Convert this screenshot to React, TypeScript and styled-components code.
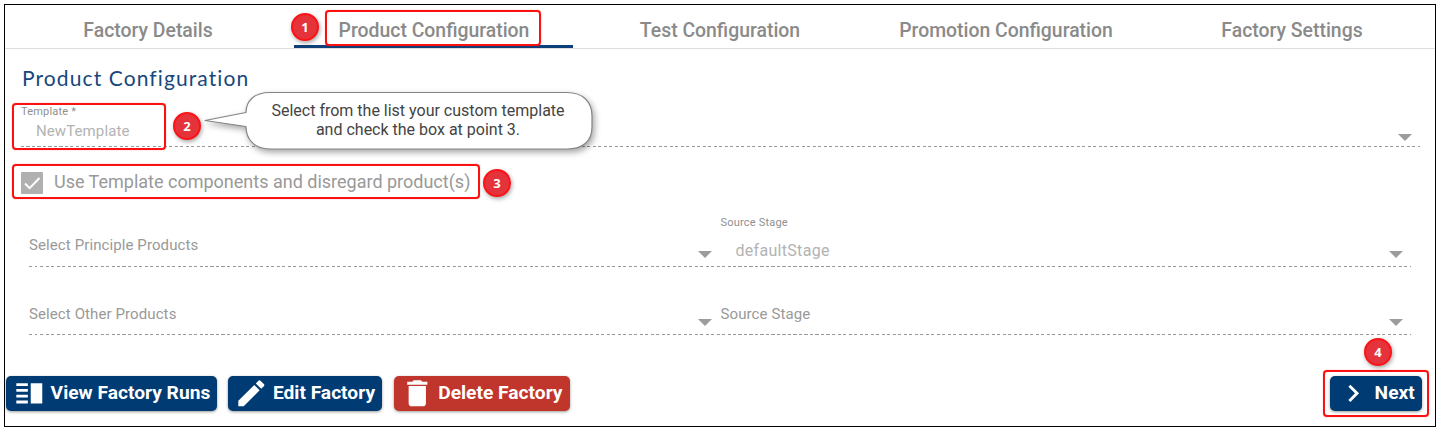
import React from 'react';
import styled, { createGlobalStyle } from 'styled-components';

const GlobalStyle = createGlobalStyle`
  *, *::before, *::after { box-sizing: border-box; }
  body { margin: 0; background: #fff; font-family: Roboto, sans-serif; }
`;

const Page = styled.div`
  position: relative;
  width: 1442px;
  height: 432px;
  padding: 4px 6px 5px 4px;
`;

const Frame = styled.main`
  display: flex;
  flex-direction: column;
  height: 423px;
  border: 1px solid #000;
`;

const Tabs = styled.nav`
  display: grid;
  grid-template-columns: repeat(5, 1fr);
  flex: none;
  height: 44px;
  border-bottom: 1px solid #dedede;
`;

const Tab = styled.a<{ $active?: boolean }>`
  height: 43px;
  margin: 0 4px 0 3px;
  padding: 1px 0 0 1px;
  border-bottom: 3px solid ${(p) => (p.$active ? '#0d4079' : 'transparent')};
  color: #8a8a8a;
  font-size: 19.4px;
  font-weight: 500;
  line-height: 49px;
  text-align: center;
  white-space: nowrap;
`;

const Title = styled.h1`
  flex: none;
  height: 54px;
  margin: 0;
  padding-left: 17px;
  color: #17477c;
  font: 400 21px/58px Lato, sans-serif;
  letter-spacing: 1.1px;
`;

const Field = styled.div`
  display: flex;
  justify-content: space-between;
  align-items: flex-end;
  flex: 1;
  height: 100%;
`;

const FieldRow = styled.div<{ $height: number; $inset: number; $right: number }>`
  display: flex;
  flex: none;
  gap: 3px;
  height: ${(p) => p.$height}px;
  margin: 0 ${(p) => p.$right}px 0 ${(p) => p.$inset}px;
  padding-right: 2px;
  background: repeating-linear-gradient(90deg, #999 0 3px, transparent 3px 5.5px) left bottom / 100% 1px no-repeat;
`;

const FieldText = styled.div`
  display: flex;
  flex-direction: column;
  justify-content: flex-end;
  height: 100%;
`;

const SmallLabel = styled.span`
  color: #8f8f8f;
  font-size: 11px;
  line-height: 14px;
  letter-spacing: 0.2px;
`;

const Value = styled.span<{ $large?: boolean }>`
  padding: ${(p) => (p.$large ? '11px 0 7px 15px' : '3px 0 6px 15px')};
  color: #b3b3b3;
  font-size: ${(p) => (p.$large ? 16 : 15)}px;
  line-height: 19px;
  letter-spacing: ${(p) => (p.$large ? 0.3 : 0.1)}px;
`;

const Placeholder = styled.span<{ $bottom: number }>`
  padding-bottom: ${(p) => p.$bottom}px;
  color: #999;
  font-size: 15px;
  line-height: 18px;
  letter-spacing: 0.1px;
`;

const Arrow = styled.i<{ $bottom?: number }>`
  margin: 0 6px ${(p) => p.$bottom ?? 9}px 0;
  border: 7px solid transparent;
  border-top-color: #9c9c9c;
  border-bottom: 0;
`;

const CheckRow = styled.label`
  display: flex;
  align-items: center;
  flex: none;
  gap: 11px;
  height: 72px;
  padding: 0 0 0 16px;
  color: #999;
  font-size: 18px;
  line-height: 22px;
  white-space: nowrap;
`;

const CheckBox = styled.span`
  display: flex;
  width: 22px;
  height: 22px;
  border-radius: 1px;
  background: #b0b0b0;
`;

const Actions = styled.footer`
  display: flex;
  align-items: flex-start;
  flex: none;
  gap: 11.3px;
  margin-top: 41px;
  padding: 0 13px 0 1px;
`;

const Button = styled.button<{ $width: number; $danger?: boolean }>`
  display: flex;
  align-items: center;
  gap: 4px;
  width: ${(p) => p.$width}px;
  height: 35px;
  padding: 0 0 0 6px;
  border: 0;
  border-radius: 5px;
  background: ${(p) => (p.$danger ? '#c1362c' : '#003b73')};
  box-shadow: 0 1px 3px rgba(0, 0, 0, 0.4);
  color: #fff;
  font: 700 19.2px/33px Roboto, sans-serif;
  white-space: nowrap;

  &:last-child { margin-left: auto; }
  svg { flex: none; width: 34.6px; height: 34.6px; fill: currentColor; }
`;

const Caption = styled.span`
  padding-bottom: 2px;
`;

const Highlight = styled.div<{ $x: number; $y: number; $w: number; $h: number }>`
  position: absolute;
  left: ${(p) => p.$x}px;
  top: ${(p) => p.$y}px;
  width: ${(p) => p.$w}px;
  height: ${(p) => p.$h}px;
  border: 2px solid #fb1111;
  border-radius: 4px;
  box-shadow: 0 0 1px rgba(251, 17, 17, 0.7);
  pointer-events: none;
`;

const Badge = styled.span<{ $x: number; $y: number }>`
  position: absolute;
  left: ${(p) => p.$x - 14}px;
  top: ${(p) => p.$y - 14}px;
  width: 28px;
  height: 28px;
  border: 2px solid #fc1318;
  border-radius: 50%;
  background: #e4333a;
  box-shadow: 1px 2px 4px rgba(0, 0, 0, 0.35);
  color: #fff;
  font: 700 13px/24px "Open Sans", sans-serif;
  text-align: center;
`;

const Callout = styled.div`
  position: absolute;
  left: 200px;
  top: 88px;
  width: 400px;
  height: 72px;
  svg { display: block; filter: drop-shadow(2px 3px 3px rgba(0, 0, 0, 0.35)); }
`;

const CalloutText = styled.p`
  position: absolute;
  left: 45px;
  top: 14px;
  width: 346px;
  margin: 0;
  color: #444;
  font: 400 16px/18.5px Roboto, sans-serif;
  text-align: center;
`;

const tabs = ['Factory Details', 'Product Configuration', 'Test Configuration', 'Promotion Configuration', 'Factory Settings'];

function Icon({ d }: { d: string }) {
  return <svg viewBox="0 0 24 24"><path d={d} /></svg>;
}

export default function App() {
  return (
    <Page>
      <GlobalStyle />
      <Frame>
        <Tabs>
          {tabs.map((t, i) => <Tab key={t} $active={i === 1}>{t}</Tab>)}
        </Tabs>
        <Title>Product Configuration</Title>
        <FieldRow $height={44} $inset={16} $right={15}>
          <Field>
            <FieldText>
              <SmallLabel>Template *</SmallLabel>
              <Value>NewTemplate</Value>
            </FieldText>
            <Arrow $bottom={6} />
          </Field>
        </FieldRow>
        <CheckRow>
          <CheckBox>
            <svg width="22" height="22" viewBox="0 0 22 22" fill="none" stroke="#fff" strokeWidth="2">
              <path d="M4 11.5l4.6 4.6L18.5 6" />
            </svg>
          </CheckBox>
          <Caption>Use Template components and disregard product(s)</Caption>
        </CheckRow>
        <FieldRow $height={48} $inset={24} $right={24}>
          <Field>
            <Placeholder $bottom={13}>Select Principle Products</Placeholder>
            <Arrow />
          </Field>
          <Field>
            <FieldText>
              <SmallLabel>Source Stage</SmallLabel>
              <Value $large>defaultStage</Value>
            </FieldText>
            <Arrow />
          </Field>
        </FieldRow>
        <FieldRow $height={68} $inset={24} $right={24}>
          <Field>
            <Placeholder $bottom={12}>Select Other Products</Placeholder>
            <Arrow />
          </Field>
          <Field>
            <Placeholder $bottom={12}>Source Stage</Placeholder>
            <Arrow />
          </Field>
        </FieldRow>
        <Actions>
          <Button $width={211}>
            <Icon d="M3 15h8v-2H3v2zm0 4h8v-2H3v2zm0-8h8V9H3v2zm0-6v2h8V5H3zm10 0h8v14h-8V5z" />
            <Caption>View Factory Runs</Caption>
          </Button>
          <Button $width={154}>
            <Icon d="M3 17.25V21h3.75L17.81 9.94l-3.75-3.75L3 17.25zM20.71 7.04a1 1 0 0 0 0-1.41l-2.34-2.34a1 1 0 0 0-1.41 0l-1.83 1.83 3.75 3.75 1.83-1.83z" />
            <Caption>Edit Factory</Caption>
          </Button>
          <Button $width={176} $danger>
            <Icon d="M6 19c0 1.1.9 2 2 2h8c1.1 0 2-.9 2-2V7H6v12zM19 4h-3.5l-1-1h-5l-1 1H5v2h14V4z" />
            <Caption>Delete Factory</Caption>
          </Button>
          <Button $width={92}>
            <Icon d="M10 6 8.59 7.41 13.17 12l-4.58 4.59L10 18l6-6z" />
            <Caption>Next</Caption>
          </Button>
        </Actions>
      </Frame>
      <Highlight $x={325} $y={10} $w={216} $h={36} />
      <Highlight $x={12} $y={103} $w={154} $h={47} />
      <Highlight $x={12} $y={164} $w={468} $h={35} />
      <Highlight $x={1323} $y={370} $w={106} $h={47} />
      <Callout>
        <svg width="400" height="72" viewBox="0 0 400 72">
          <path
            d="M70 4.500H367C383 4.500 392 14 392 28V39C392 53 383 61 367 61H70C54 61 46 51 46 38.500L5 32.500L46 24.500C46 13 54 4.500 70 4.500Z"
            fill="#fff" stroke="#858585" strokeWidth="1.200" strokeLinejoin="round"
          />
        </svg>
        <CalloutText>Select from the list your custom template<br />and check the box at point 3.</CalloutText>
      </Callout>
      <Badge $x={305} $y={27}>1</Badge>
      <Badge $x={187} $y={126}>2</Badge>
      <Badge $x={497} $y={183}>3</Badge>
      <Badge $x={1378} $y={352}>4</Badge>
    </Page>
  );
}
